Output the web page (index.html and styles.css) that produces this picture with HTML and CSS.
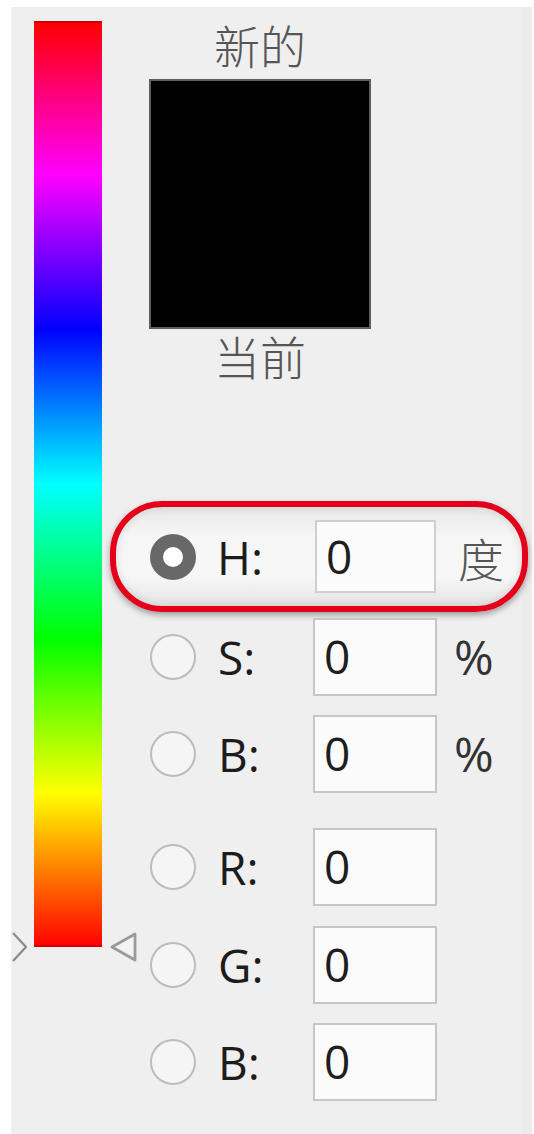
FILE: index.html
```html
<!DOCTYPE html>
<html lang="zh">
<head>
<meta charset="utf-8">
<title>拾色器</title>
<link rel="stylesheet" href="styles.css">
</head>
<body>
<div class="panel">
  <div class="hue-col">
    <div class="hue-bar">
      <svg class="mark mark-left" width="18" height="32" viewBox="0 0 18 32"><polyline points="2,2 15,16 2,30" fill="none" stroke="#8a8a8a" stroke-width="2.2" stroke-linejoin="round"/></svg>
      <svg class="mark mark-right" width="30" height="32" viewBox="0 0 30 32"><path d="M3 16 L26 3 L26 29 Z" fill="#f3f3f3" stroke="#9a9a9a" stroke-width="2.8" stroke-linejoin="round"/></svg>
    </div>
  </div>
  <div class="main">
    <div class="preview">
      <div class="pv-label">新的</div>
      <div class="swatch"></div>
      <div class="pv-label pv-label-bottom">当前</div>
    </div>
    <div class="fields">
      <div class="row row-h highlight">
        <span class="radio radio-on"></span>
        <span class="label label-h">H:</span>
        <span class="input input-h">0</span>
        <span class="unit unit-cjk">度</span>
      </div>
      <div class="row row-s">
        <span class="radio"></span>
        <span class="label">S:</span>
        <span class="input">0</span>
        <span class="unit">%</span>
      </div>
      <div class="row row-b">
        <span class="radio"></span>
        <span class="label">B:</span>
        <span class="input">0</span>
        <span class="unit">%</span>
      </div>
      <div class="row row-r">
        <span class="radio"></span>
        <span class="label">R:</span>
        <span class="input">0</span>
      </div>
      <div class="row row-g">
        <span class="radio"></span>
        <span class="label">G:</span>
        <span class="input">0</span>
      </div>
      <div class="row row-b2">
        <span class="radio"></span>
        <span class="label">B:</span>
        <span class="input">0</span>
      </div>
    </div>
  </div>
</div>
</body>
</html>
```

FILE: styles.css
```css
html, body {
  margin: 0;
  padding: 0;
  background: #ffffff;
}

body {
  font-family: "Open Sans", "Noto Sans CJK SC", sans-serif;
  color: #1e1e1e;
}

.panel {
  display: flex;
  margin: 7px 2px 0 11px;
  height: 1127px;
  background: #efefef;
  border-right: 10px solid #ebebeb;
  box-sizing: border-box;
}

.hue-col {
  flex: 0 0 auto;
}

.hue-bar {
  position: relative;
  margin: 14px 0 0 23px;
  width: 68px;
  height: 926px;
  background: linear-gradient(to bottom,
    #ff0000 0%,
    #ff00ff 16.67%,
    #0000ff 33.33%,
    #00ffff 50%,
    #00ff00 66.67%,
    #ffff00 83.33%,
    #ff0000 100%);
  box-shadow: inset 0 -2px 0 rgba(120, 0, 0, 0.35), inset 0 2px 0 rgba(90, 0, 0, 0.3);
}

.mark {
  position: absolute;
  display: block;
}

.mark-left {
  left: -23px;
  bottom: -16px;
}

.mark-right {
  right: -37px;
  bottom: -16px;
}

.main {
  flex: 1 1 auto;
  display: flex;
  flex-direction: column;
}

.preview {
  margin-left: 47px;
  width: 222px;
  display: flex;
  flex-direction: column;
  align-items: center;
}

.pv-label {
  margin-top: 13px;
  font-family: "Noto Sans CJK SC", sans-serif;
  font-weight: 300;
  font-size: 46px;
  line-height: 48px;
  color: #555555;
}

.pv-label-bottom {
  margin-top: 2px;
}

.swatch {
  margin-top: 11px;
  width: 222px;
  height: 250px;
  box-sizing: border-box;
  background: #000;
  border: 2px solid #5e5e5e;
}

.fields {
  display: flex;
  flex-direction: column;
  margin-top: 122px;
}

.row {
  display: flex;
  align-items: center;
  margin-left: 8px;
  padding-left: 40px;
  height: 80px;
  box-sizing: border-box;
}

.highlight {
  width: 418px;
  height: 111px;
  padding-left: 34px;
  border: 6px solid #e2001a;
  border-radius: 52px;
  background: linear-gradient(to bottom, #e8e8e8 0%, #f6f6f6 30%, #f7f7f7 70%, #e4e4e4 100%);
  box-shadow: 0 3px 6px rgba(0, 0, 0, 0.35), inset 0 0 10px rgba(0, 0, 0, 0.12);
}

.row-s { margin-top: 5px; }
.row-b { margin-top: 17px; }
.row-r { margin-top: 33px; }
.row-g { margin-top: 18px; }
.row-b2 { margin-top: 17px; }

.radio {
  flex: 0 0 auto;
  width: 46px;
  height: 46px;
  box-sizing: border-box;
  border-radius: 50%;
  border: 2px solid #bcbcbc;
  background: #f5f5f5;
}

.radio-on {
  border: 13px solid #686868;
  background: #ffffff;
}

.label {
  flex: 0 0 auto;
  width: 95px;
  margin-left: 22px;
  font-size: 46px;
  line-height: 60px;
  color: #1c1c1c;
}

.label-h {
  width: 98px;
  margin-left: 21px;
}

.input {
  flex: 0 0 auto;
  width: 124px;
  height: 78px;
  box-sizing: border-box;
  border: 2px solid #c6c6c6;
  background: #fbfbfb;
  padding-left: 9px;
  font-size: 46px;
  line-height: 72px;
  color: #1e1e1e;
}

.input-h {
  width: 121px;
  height: 73px;
  line-height: 68px;
  border-color: #cfcfcf;
}

.unit {
  flex: 0 0 auto;
  margin-left: 17px;
  font-size: 48px;
  line-height: 60px;
  color: #333;
}

.unit-cjk {
  margin-left: 22px;
  font-family: "Noto Sans CJK SC", sans-serif;
  font-weight: 300;
  font-size: 46px;
  color: #555;
}
```
